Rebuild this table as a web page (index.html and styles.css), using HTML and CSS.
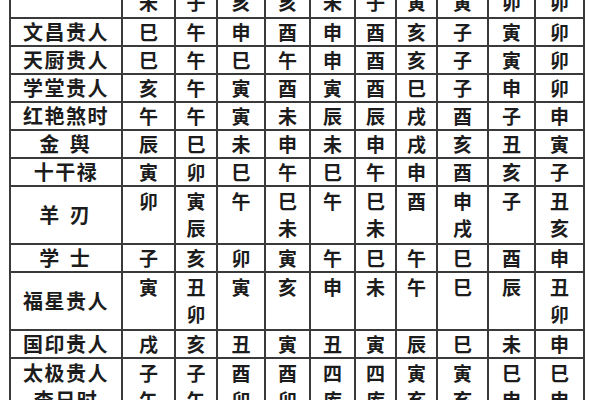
FILE: index.html
```html
<!DOCTYPE html>
<html lang="zh">
<head>
<meta charset="utf-8">
<link rel="stylesheet" href="styles.css">
</head>
<body>
<table class="grid">
  <colgroup>
    <col class="c-label"><col class="w53"><col class="w42"><col class="w48"><col class="w45"><col class="w45"><col class="w41"><col class="w41"><col class="w51"><col class="w47"><col class="w49">
  </colgroup>
  <tr class="r2"><th>天乙贵人</th><td>丑<br>未</td><td>申<br>子</td><td>酉<br>亥</td><td>酉<br>亥</td><td>丑<br>未</td><td>申<br>子</td><td>午<br>寅</td><td>午<br>寅</td><td>巳<br>卯</td><td>巳<br>卯</td></tr>
  <tr class="r1"><th>文昌贵人</th><td>巳</td><td>午</td><td>申</td><td>酉</td><td>申</td><td>酉</td><td>亥</td><td>子</td><td>寅</td><td>卯</td></tr>
  <tr class="r1"><th>天厨贵人</th><td>巳</td><td>午</td><td>巳</td><td>午</td><td>申</td><td>酉</td><td>亥</td><td>子</td><td>寅</td><td>卯</td></tr>
  <tr class="r1"><th>学堂贵人</th><td>亥</td><td>午</td><td>寅</td><td>酉</td><td>寅</td><td>酉</td><td>巳</td><td>子</td><td>申</td><td>卯</td></tr>
  <tr class="r1"><th>红艳煞时</th><td>午</td><td>午</td><td>寅</td><td>未</td><td>辰</td><td>辰</td><td>戌</td><td>酉</td><td>子</td><td>申</td></tr>
  <tr class="r1"><th class="wide">金 舆</th><td>辰</td><td>巳</td><td>未</td><td>申</td><td>未</td><td>申</td><td>戌</td><td>亥</td><td>丑</td><td>寅</td></tr>
  <tr class="r1"><th>十干禄</th><td>寅</td><td>卯</td><td>巳</td><td>午</td><td>巳</td><td>午</td><td>申</td><td>酉</td><td>亥</td><td>子</td></tr>
  <tr class="r2"><th class="wide">羊 刃</th><td>卯</td><td>寅<br>辰</td><td>午</td><td>巳<br>未</td><td>午</td><td>巳<br>未</td><td>酉</td><td>申<br>戌</td><td>子</td><td>丑<br>亥</td></tr>
  <tr class="r1"><th class="wide">学 士</th><td>子</td><td>亥</td><td>卯</td><td>寅</td><td>午</td><td>巳</td><td>午</td><td>巳</td><td>酉</td><td>申</td></tr>
  <tr class="r2"><th>福星贵人</th><td>寅</td><td>丑<br>卯</td><td>寅</td><td>亥</td><td>申</td><td>未</td><td>午</td><td>巳</td><td>辰</td><td>丑<br>卯</td></tr>
  <tr class="r1"><th>国印贵人</th><td>戌</td><td>亥</td><td>丑</td><td>寅</td><td>丑</td><td>寅</td><td>辰</td><td>巳</td><td>未</td><td>申</td></tr>
  <tr class="r2"><th class="two">太极贵人<br>查日时</th><td>子<br>午</td><td>子<br>午</td><td>酉<br>卯</td><td>酉<br>卯</td><td>四<br>库</td><td>四<br>库</td><td>寅<br>亥</td><td>寅<br>亥</td><td>巳<br>申</td><td>巳<br>申</td></tr>
</table>
</body>
</html>
```

FILE: styles.css
```css
html, body {
  margin: 0;
  padding: 0;
  background: #ffffff;
  overflow: hidden;
}
body {
  width: 600px;
  height: 400px;
  font-family: "Noto Sans CJK SC", "Noto Sans CJK TC", sans-serif;
  color: #1c1c1c;
}
.grid {
  border-collapse: collapse;
  table-layout: fixed;
  margin-top: -41px;
  margin-left: 9px;
  width: 576px;
}
.c-label { width: 112px; }
.w53 { width: 53px; }
.w42 { width: 42px; }
.w48 { width: 48px; }
.w45 { width: 45px; }
.w41 { width: 41px; }
.w51 { width: 51px; }
.w47 { width: 47px; }
.w49 { width: 49px; }
.grid th, .grid td {
  border: 2px solid #3a3a3a;
  padding: 0;
  text-align: center;
  font-weight: 700;
}
.grid th {
  font-size: 20px;
  letter-spacing: 1.5px;
  line-height: 26px;
  vertical-align: middle;
}
.grid th.wide {
  letter-spacing: 3px;
}
.grid th.two {
  line-height: 27px;
  vertical-align: top;
}
.grid td {
  font-size: 19px;
  line-height: 26px;
  vertical-align: top;
}
.r2 td {
  line-height: 27px;
}
.r1 { height: 27px; }
.r2 { height: 58px; }
```
